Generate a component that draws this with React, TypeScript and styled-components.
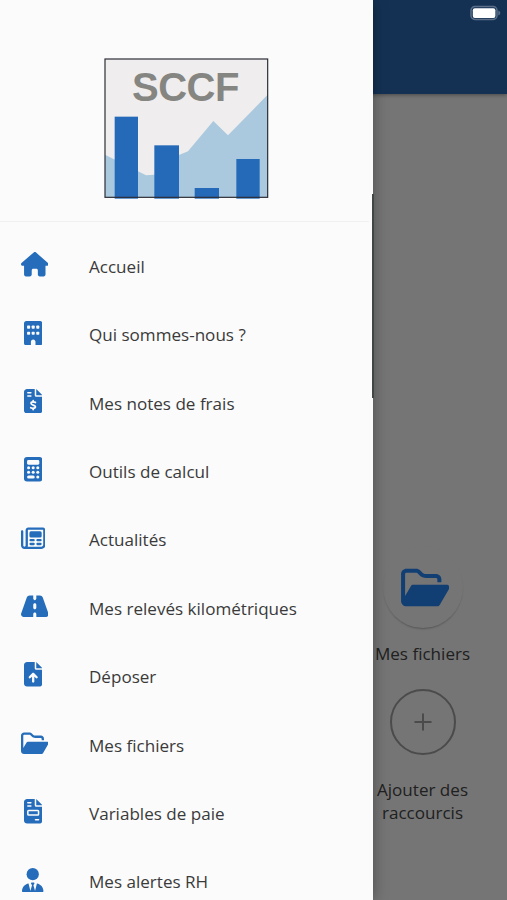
import React from "react";
import styled, { createGlobalStyle } from "styled-components";

const GlobalStyle = createGlobalStyle`
  * { box-sizing: border-box; }
  body {
    margin: 0;
    overflow: hidden;
    font-family: "Open Sans", "Noto Sans", sans-serif;
  }
`;

const surface = "#fbfbfb";

const Screen = styled.div`
  position: relative;
  width: 507px;
  height: 900px;
  overflow: hidden;
  background: #757575;
`;

const Page = styled.main`
  display: flex;
  flex-direction: column;
  height: 100%;
`;

const AppBar = styled.header`
  display: flex;
  justify-content: flex-end;
  flex: 0 0 94px;
  padding: 5px 5px 0 0;
  background: #143154;
  box-shadow: 0 1px 4px rgba(0, 0, 0, 0.4);
`;

const Shortcuts = styled.section`
  display: flex;
  flex-direction: column;
  align-items: center;
  align-self: flex-end;
  width: 169px;
  padding-top: 452px;
`;

const ShortcutDisc = styled.div`
  display: flex;
  align-items: center;
  justify-content: center;
  width: 80px;
  height: 82px;
  border-radius: 50%;
  background: #757575;
  box-shadow: 0 2px 2px -1px rgba(0, 0, 0, 0.28);
  color: #123f73;

  svg {
    flex: none;
    width: 48.5px;
    height: 43px;
    margin-left: 5px;
  }
`;

const AddRing = styled.div`
  display: flex;
  align-items: center;
  justify-content: center;
  width: 66px;
  height: 66px;
  margin-top: 24px;
  border: 2px solid #4b4b4b;
  border-radius: 50%;
`;

const ShortcutLabel = styled.div<{ $gap: number }>`
  width: 110px;
  margin-top: ${({ $gap }) => $gap}px;
  color: #202020;
  font-size: 17.07px;
  line-height: 23.4px;
  text-align: center;
`;

const Drawer = styled.aside`
  position: absolute;
  top: 0;
  left: 0;
  display: flex;
  flex-direction: column;
  width: 372.5px;
  height: 900px;
  background: ${surface};
  box-shadow: 0 0 14px rgba(0, 0, 0, 0.35);
`;

const ScrollEdge = styled.div`
  position: absolute;
  top: 194px;
  left: 372px;
  width: 2px;
  height: 204px;
  background: #414646;
`;

const DrawerHeader = styled.div`
  display: flex;
  justify-content: center;
  flex: 0 0 222px;
  width: 369px;
  padding: 58px 0 0 4px;
  border-bottom: 1px solid #f0f0f0;
`;

const Menu = styled.nav`
  display: flex;
  flex-direction: column;
  padding-top: 10.7px;
`;

const MenuItem = styled.a`
  display: flex;
  align-items: center;
  flex: 0 0 68.4px;
  padding-left: 20.6px;
`;

const IconSlot = styled.span<{ $wide?: boolean }>`
  display: flex;
  justify-content: ${({ $wide }) => ($wide ? "flex-start" : "center")};
  width: 24.5px;
  margin: 0 43.9px 5px 0;
  color: #256cba;

  svg {
    flex: none;
    width: auto;
    height: 24.5px;
  }
`;

const MenuLabel = styled.span`
  color: #3a3a3a;
  font-size: 17.07px;
  line-height: 24px;
  white-space: nowrap;
`;

function Glyph({ width, children }: { width: number; children: React.ReactNode }) {
  return (
    <svg viewBox={`0 0 ${width} 512`} fill="currentColor">
      {children}
    </svg>
  );
}

const House = () => (
  <Glyph width={576}>
    <path d="M575.8 255.5c0 18-15 32.1-32 32.1h-32l.7 160.2c0 2.7-.2 5.4-.5 8.1V472c0 22.1-17.9 40-40 40H456c-1.1 0-2.2 0-3.3-.1c-1.4 .1-2.8 .1-4.2 .1H416 392c-22.1 0-40-17.9-40-40V448 384c0-17.7-14.3-32-32-32H256c-17.7 0-32 14.3-32 32v64 24c0 22.1-17.9 40-40 40H160 128.1c-1.5 0-3-.1-4.5-.2c-1.2 .1-2.4 .2-3.6 .2H104c-22.1 0-40-17.9-40-40V360c0-.9 0-1.9 .1-2.8V287.6H32c-18 0-32-14-32-32.1c0-9 3-17 10-24L266.4 8c7-7 15-8 22-8s15 2 21 7L564.8 231.5c8 7 12 15 11 24z" />
  </Glyph>
);

const Building = () => (
  <Glyph width={384}>
    <path d="M48 0C21.5 0 0 21.5 0 48V464c0 26.5 21.5 48 48 48h96V432c0-26.5 21.5-48 48-48s48 21.5 48 48v80h96c26.5 0 48-21.5 48-48V48c0-26.5-21.5-48-48-48H48z" />
    {[96, 224].map((y) =>
      [64, 160, 256].map((x) => (
        <rect key={`${x}-${y}`} x={x} y={y} width="64" height="64" rx="16" fill={surface} />
      ))
    )}
  </Glyph>
);

const FileShape = () => (
  <path d="M64 0C28.7 0 0 28.7 0 64V448c0 35.3 28.7 64 64 64H320c35.3 0 64-28.7 64-64V160H256c-17.7 0-32-14.3-32-32V0H64zM256 0V128H384L256 0z" />
);

const FileLines = () => (
  <g fill={surface}>
    <rect x="64" y="64" width="96" height="32" rx="16" />
    <rect x="64" y="128" width="96" height="32" rx="16" />
  </g>
);

const DollarFile = () => (
  <Glyph width={384}>
    <FileShape />
    <FileLines />
    <g fill="none" stroke={surface} strokeWidth="38" strokeLinecap="round">
      <path d="M192 244v22M192 408v22" />
      <path d="M238 281c-15-7-32-12-48-12-24 0-43 10-43 30 0 46 91 26 91 74 0 21-20 32-46 32-18 0-34-6-50-13" />
    </g>
  </Glyph>
);

const Calculator = () => (
  <Glyph width={384}>
    <rect width="384" height="512" rx="64" />
    <g fill={surface}>
      <rect x="64" y="64" width="256" height="96" rx="28" />
      {[224, 320].map((y) =>
        [96, 192, 288].map((x) => <circle key={`${x}-${y}`} cx={x} cy={y} r="32" />)
      )}
      <rect x="64" y="384" width="160" height="64" rx="32" />
      <circle cx="288" cy="416" r="32" />
    </g>
  </Glyph>
);

const Newspaper = () => (
  <Glyph width={512}>
    <path
      fillRule="evenodd"
      d="M456 32H152C121.1 32 96 57.1 96 88v320c0 13.2-10.8 24-24 24s-24-10.8-24-24V112c0-13.2-10.8-24-24-24S0 98.8 0 112v296c0 39.7 32.3 72 72 72h352c48.5 0 88-39.5 88-88V88c0-30.9-25.1-56-56-56zM464 392c0 22.1-17.9 40-40 40H139.9c2.6-7.5 4.1-15.6 4.1-24V88c0-4.4 3.6-8 8-8h304c4.4 0 8 3.6 8 8z"
    />
    <rect x="176" y="112" width="256" height="128" rx="32" />
    <rect x="176" y="272" width="112" height="48" rx="24" />
    <rect x="320" y="272" width="112" height="48" rx="24" />
    <rect x="176" y="352" width="112" height="48" rx="24" />
    <rect x="320" y="352" width="112" height="48" rx="24" />
  </Glyph>
);

const Road = () => (
  <Glyph width={576}>
    <path d="M256 32H181.2c-27.1 0-51.3 17.1-60.3 42.6L3.1 407.2C1.1 413 0 419.2 0 425.4C0 455.5 24.5 480 54.6 480H256V416c0-17.7 14.3-32 32-32s32 14.3 32 32v64H521.4c30.2 0 54.6-24.5 54.6-54.6c0-6.2-1.1-12.4-3.1-18.2L455.1 74.6C446 49.1 421.9 32 394.8 32H320V96c0 17.7-14.3 32-32 32s-32-14.3-32-32V32zm64 192v64c0 17.7-14.3 32-32 32s-32-14.3-32-32V224c0-17.7 14.3-32 32-32s32 14.3 32 32z" />
  </Glyph>
);

const UploadFile = () => (
  <Glyph width={384}>
    <FileShape />
    <path
      fill={surface}
      d="M216 408c0 13.3-10.7 24-24 24s-24-10.7-24-24V305.9l-31 31c-9.4 9.4-24.6 9.4-33.9 0s-9.4-24.6 0-33.9l72-72c9.4-9.4 24.6-9.4 33.9 0l72 72c9.4 9.4 9.4 24.6 0 33.9s-24.6 9.4-33.9 0l-31-31V408z"
    />
  </Glyph>
);

const OpenFolder = () => (
  <Glyph width={576}>
    <path d="M384 480h48c11.4 0 21.9-6 27.6-15.9l112-192c5.8-9.9 5.8-22.1 .1-32.1S555.5 224 544 224H144c-11.4 0-21.9 6-27.6 15.9L48 357.1V96c0-8.8 7.2-16 16-16H181.5c4.2 0 8.3 1.7 11.3 4.7l26.5 26.5c21 21 49.5 32.8 79.2 32.8H416c8.8 0 16 7.2 16 16v32h48V160c0-35.3-28.7-64-64-64H298.5c-17 0-33.3-6.7-45.3-18.7L226.7 50.7c-12-12-28.3-18.7-45.3-18.7H64C28.7 32 0 60.7 0 96V416c0 35.3 28.7 64 64 64H87.7 384z" />
  </Glyph>
);

const InvoiceFile = () => (
  <Glyph width={384}>
    <FileShape />
    <FileLines />
    <rect x="80" y="240" width="224" height="96" rx="16" fill="none" stroke={surface} strokeWidth="32" />
    <rect x="224" y="416" width="96" height="32" rx="16" fill={surface} />
  </Glyph>
);

const UserTie = () => (
  <Glyph width={448}>
    <circle cx="224" cy="128" r="128" />
    <path d="M209.1 359.2l-18.6-31c-6.4-10.7 1.3-24.2 13.7-24.2H224h19.7c12.4 0 20.1 13.6 13.7 24.2l-18.6 31 33.4 123.9 39.5-161.2c77.2 12 136.3 78.8 136.3 159.4c0 17-13.8 30.7-30.7 30.7H265.5 182.5 30.7C13.8 512 0 498.2 0 481.3c0-80.6 59.1-147.4 136.3-159.4l39.5 161.2 33.4-123.9z" />
  </Glyph>
);

const items: { label: string; icon: React.ComponentType; wide?: boolean }[] = [
  { label: "Accueil", icon: House, wide: true },
  { label: "Qui sommes-nous ?", icon: Building },
  { label: "Mes notes de frais", icon: DollarFile },
  { label: "Outils de calcul", icon: Calculator },
  { label: "Actualités", icon: Newspaper },
  { label: "Mes relevés kilométriques", icon: Road, wide: true },
  { label: "Déposer", icon: UploadFile },
  { label: "Mes fichiers", icon: OpenFolder, wide: true },
  { label: "Variables de paie", icon: InvoiceFile },
  { label: "Mes alertes RH", icon: UserTie },
];

function Logo() {
  return (
    <svg width="165" height="141" viewBox="42 40 495 423" aria-label="SCCF">
      <rect x="45" y="43" width="488" height="415" fill="#efeded" />
      <path
        d="M45 330 75 345 144 380 168 392 193 390 267 331 294 320 370 229 414 272 533 150V458H45Z"
        fill="#abc9de"
      />
      <g fill="#256ab8">
        <rect x="74" y="216" width="70" height="246" />
        <rect x="193" y="302" width="74" height="160" />
        <rect x="314" y="430" width="73" height="32" />
        <rect x="439" y="343" width="70" height="119" />
      </g>
      <rect x="45" y="43" width="488" height="415" fill="none" stroke="#2c2e36" strokeWidth="3.6" />
      <text
        x="126"
        y="170"
        fill="#858582"
        fontFamily="Liberation Sans, Arial, sans-serif"
        fontWeight="700"
        fontSize="120"
        textLength="322"
      >
        SCCF
      </text>
    </svg>
  );
}

function Battery() {
  return (
    <svg width="32" height="16" viewBox="0 0 32 16">
      <rect x="1" y="1.6" width="26" height="12.8" rx="3.8" fill="#143154" stroke="#5b7088" strokeWidth="1.5" />
      <rect x="2.8" y="3.3" width="22.6" height="9.6" rx="2" fill="#fff" />
      <path d="M28.3 5.5q2 .8 2 2.5t-2 2.5Z" fill="#5b7088" />
    </svg>
  );
}

export default function App() {
  return (
    <Screen>
      <GlobalStyle />
      <Page>
        <AppBar>
          <Battery />
        </AppBar>
        <Shortcuts>
          <ShortcutDisc>
            <OpenFolder />
          </ShortcutDisc>
          <ShortcutLabel $gap={14}>Mes fichiers</ShortcutLabel>
          <AddRing>
            <svg width="18" height="18" viewBox="0 0 18 18">
              <path d="M9 .5v17M.5 9h17" stroke="#4b4b4b" strokeWidth="2" />
            </svg>
          </AddRing>
          <ShortcutLabel $gap={22.6}>Ajouter des raccourcis</ShortcutLabel>
        </Shortcuts>
      </Page>
      <Drawer>
        <DrawerHeader>
          <Logo />
        </DrawerHeader>
        <Menu>
          {items.map(({ label, icon: Icon, wide }) => (
            <MenuItem key={label}>
              <IconSlot $wide={wide}>
                <Icon />
              </IconSlot>
              <MenuLabel>{label}</MenuLabel>
            </MenuItem>
          ))}
        </Menu>
      </Drawer>
      <ScrollEdge />
    </Screen>
  );
}
